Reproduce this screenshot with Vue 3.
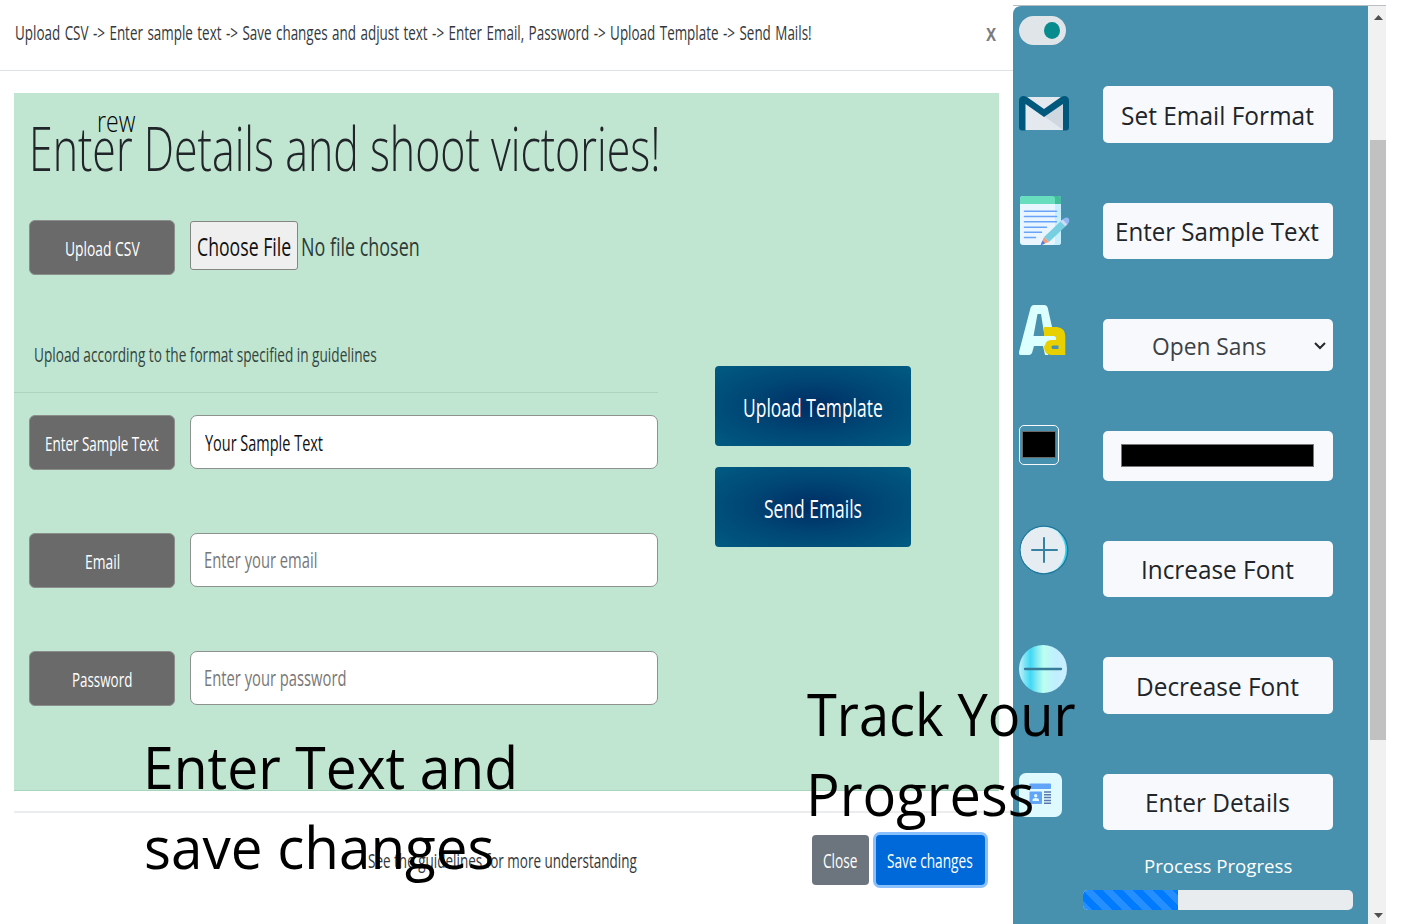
<script setup>
// Squeezes a label horizontally so that its drawn glyphs span the given width.
const ctx = document.createElement('canvas').getContext('2d')
const vFit = {
  mounted(el, { value }) {
    const cs = getComputedStyle(el)
    ctx.font = `${cs.fontWeight} ${cs.fontSize} ${cs.fontFamily}`
    ctx.wordSpacing = cs.wordSpacing
    const m = ctx.measureText(el.textContent.trim())
    const scale = value / (m.actualBoundingBoxLeft + m.actualBoundingBoxRight)
    const left = m.actualBoundingBoxLeft * scale
    el.style.transform = `scaleX(${scale})`
    el.style.marginLeft = `${left}px`
    el.style.marginRight = `${value - left - m.width}px`
  }
}

const fields = [
  { id: 'sample', label: 'Enter Sample Text', labelWidth: 112, text: 'Your Sample Text', textWidth: 118, filled: true },
  { id: 'email', label: 'Email', labelWidth: 33, text: 'Enter your email', textWidth: 111 },
  { id: 'password', label: 'Password', labelWidth: 58, text: 'Enter your password', textWidth: 140 }
]
const progress = 35.2
</script>

<template>
  <div class="page">
    <main class="modal">
      <header class="modal-head">
        <span v-fit="795" class="t steps">Upload CSV -&gt; Enter sample text -&gt; Save changes and adjust text -&gt; Enter Email, Password -&gt; Upload Template -&gt; Send Mails!</span>
        <span v-fit="10" class="t close-x">x</span>
      </header>

      <section class="panel">
        <div class="form">
          <h1><span v-fit="624" class="t">Enter Details and shoot victories!</span></h1>
          <div class="row upload">
            <div class="label"><span v-fit="74.5" class="t">Upload CSV</span></div>
            <div class="file">
              <div class="choose"><span v-fit="93" class="t">Choose File</span></div>
              <span v-fit="116" class="t">No file chosen</span>
            </div>
          </div>
          <p class="hint"><span v-fit="341.5" class="t">Upload according to the format specified in guidelines</span></p>
          <div v-for="f in fields" :key="f.id" class="row field">
            <div class="label"><span v-fit="f.labelWidth" class="t">{{ f.label }}</span></div>
            <div class="input" :class="{ filled: f.filled }"><span v-fit="f.textWidth" class="t">{{ f.text }}</span></div>
          </div>
        </div>
        <div class="actions">
          <div class="action"><span v-fit="138" class="t">Upload Template</span></div>
          <div class="action"><span v-fit="97" class="t">Send Emails</span></div>
        </div>
      </section>

      <footer class="modal-foot">
        <div class="guide"><span v-fit="268" class="t">See the guidelines for more understanding</span></div>
        <div class="btn grey"><span v-fit="33.5" class="t">Close</span></div>
        <div class="btn blue"><span v-fit="84.5" class="t">Save changes</span></div>
      </footer>
    </main>

    <aside class="side">
      <div class="tools">
        <div class="tool toggle-row"><div class="toggle"><i></i></div></div>

        <div class="tool mail">
          <svg width="50" height="35" viewBox="0 0 50 35">
            <path d="M5 1h40v33H5z" fill="#e3e9ee" />
            <path d="M25 20 44 34V8z" fill="#cfd8e0" />
            <path d="M0 5Q0 0 5 0L8 1 25 13 42 1 45 0Q50 0 50 5V31Q50 34.500 47 34.500H44V8L25 21 6.500 8V34.500H3Q0 34.500 0 31Z" fill="#00597d" />
          </svg>
          <div class="key"><span v-fit="192" class="t">Set Email Format</span></div>
        </div>

        <div class="tool note">
          <svg width="51" height="50" viewBox="0 0 51 50">
            <rect x="1" y="0" width="41" height="49" rx="3" fill="#e9f5ff" />
            <path d="M36 8h6v38q0 3-3 3h-6q3 0 3-3z" fill="#c6f0ff" />
            <path d="M1 8V3q0-3 3-3h35q3 0 3 3v5z" fill="#67dfbf" />
            <path d="M33 0h6q3 0 3 3v5h-6V3q0-3-3-3z" fill="#44bd9c" />
            <path d="M5.500 15.300h32M5.500 20.500h32M5.500 25.700h32M5.500 31.200h22M5.500 36.300h17M5.500 41.500h11" stroke="#6aa4f8" stroke-width="1.600" stroke-linecap="round" />
            <path d="m25 41 18-17 5 5-18 17z" fill="#78cfe2" />
            <path d="m43 24 2-1.500q3-2 5 .5 1 2-.5 4L48 29z" fill="#94b8f3" />
            <path d="m41.500 25.500 2-2 4.700 4.800-2 2z" fill="#cfdcf8" />
            <path d="m25 41-3 7.500 8-2.500z" fill="#f09c7d" />
            <path d="m23.500 44.500-2 5 4.500-2z" fill="#4d7be5" />
          </svg>
          <div class="key"><span v-fit="202" class="t">Enter Sample Text</span></div>
        </div>

        <div class="tool face">
          <svg width="47" height="51" viewBox="0 0 47 51">
            <path fill-rule="evenodd" d="M11.500 3Q12.500 0 15 0H25Q28 0 28.800 3L35 31 29 50H26L24 41H15L13 48Q12 50 10 50H2Q-.5 50 0 47ZM18.500 9 14.500 31H25.500L22 9Z" fill="#dcffff" />
            <path fill-rule="evenodd" d="M25 22H38Q46.300 23 46.300 31V50H32Q25 49 25 42 25 36 32 35H37V32.500Q37 31 35 31H25ZM34 40.500Q32.500 40.500 32.500 42.200T34 44H39.500V40.500Z" fill="#e7cf00" />
            <path d="M16 31H35Q37 31 37 32.500V35H31Q27 35 26 40.500H16Z" fill="#dcffff" />
          </svg>
          <div class="key">
            <span v-fit="113" class="t">Open Sans</span>
            <svg class="chev" width="12" height="8" viewBox="0 0 12 8"><path d="m1 1 5 5 5-5" fill="none" stroke="#24282c" stroke-width="2" /></svg>
          </div>
        </div>

        <div class="tool colour">
          <div class="swatch"><i></i></div>
          <div class="key"><i></i></div>
        </div>

        <div class="tool plus">
          <svg width="50" height="50" viewBox="0 0 50 50">
            <defs><linearGradient id="edge"><stop offset=".78" stop-color="#c5f7ff" /><stop offset="1" stop-color="#0bc5e6" /></linearGradient></defs>
            <circle cx="25" cy="25" r="23.800" fill="url(#edge)" stroke="#23779c" stroke-width="1.300" />
            <ellipse cx="24" cy="25" rx="22.300" ry="22.800" fill="#e5edf3" />
            <path d="M25 13v24M13 25h25" stroke="#3782a3" stroke-width="2" stroke-linecap="round" />
          </svg>
          <div class="key"><span v-fit="151" class="t">Increase Font</span></div>
        </div>

        <div class="tool minus">
          <svg width="49" height="49" viewBox="0 0 49 49">
            <defs><linearGradient id="shine"><stop offset="0" stop-color="#c5f3fa" /><stop offset=".1" stop-color="#8ae7f7" /><stop offset=".24" stop-color="#40d8f4" /><stop offset=".34" stop-color="#75e5f3" /><stop offset=".51" stop-color="#bbffef" /><stop offset=".75" stop-color="#c0efff" /><stop offset="1" stop-color="#c9efff" /></linearGradient></defs>
            <circle cx="24" cy="24" r="24" fill="url(#shine)" />
            <path d="M6 24h36" stroke="#367b98" stroke-width="2.300" stroke-linecap="round" />
          </svg>
          <div class="key"><span v-fit="161" class="t">Decrease Font</span></div>
        </div>

        <div class="tool details">
          <svg width="44" height="44" viewBox="0 0 44 44">
            <rect width="43" height="44" rx="7" fill="#dffaff" />
            <rect x="10.500" y="10.500" width="21.500" height="5.500" rx="1" fill="#62a4f8" />
            <rect x="10.500" y="18.500" width="12.500" height="12.500" rx="1" fill="#62a4f8" />
            <circle cx="16.700" cy="22.700" r="1.700" fill="#dffaff" />
            <path d="M13.500 28v-1q0-2 3.200-2t3.300 2v1z" fill="#dffaff" />
            <path d="M25 19h7M25 21.800h7M25 24.600h7M25 27.400h7M25 30.200h7" stroke="#5877ae" stroke-width="1.500" />
          </svg>
          <div class="key"><span v-fit="142" class="t">Enter Details</span></div>
        </div>

        <div class="progress">
          <span v-fit="146.500" class="t">Process Progress</span>
          <div class="bar"><div class="fill" :style="{ width: progress + '%' }"></div></div>
        </div>
      </div>

      <div class="scroll">
        <svg width="9" height="5" viewBox="0 0 9 5"><path d="M4.500 0 9 5H0z" fill="#505050" /></svg>
        <div class="thumb"></div>
        <svg class="down" width="9" height="5" viewBox="0 0 9 5"><path d="M0 0h9L4.500 5z" fill="#505050" /></svg>
      </div>
    </aside>

    <div class="over rew"><span v-fit="37" class="t">rew</span></div>
    <div class="over enter">
      <div><span v-fit="366" class="t">Enter Text and</span></div>
      <div class="second"><span v-fit="347" class="t">save changes</span></div>
    </div>
    <div class="over track">
      <div><span v-fit="268" class="t">Track Your</span></div>
      <div class="second"><span v-fit="222" class="t">Progress</span></div>
    </div>
  </div>
</template>

<style>
html, body { margin: 0; background: #fff; overflow: hidden; }
</style>

<style scoped>
* { box-sizing: border-box; }
.page { position: relative; display: flex; width: 1423px; height: 924px; overflow: hidden; background: #fff; font-family: "Open Sans", "Noto Sans", sans-serif; color: #212529; font-size: 20.5px; }
.t { display: inline-block; flex: none; white-space: nowrap; transform-origin: 0 50%; }
.modal { width: 1013px; display: flex; flex-direction: column; }
.modal-head { height: 71px; padding: 0 17px 6px 15.500px; border-bottom: 1px solid #dee2e6; display: flex; align-items: center; justify-content: space-between; color: #33383c; }
.steps { word-spacing: 1.500px; }
.close-x { font-weight: 600; font-size: 24px; line-height: 24px; color: #7b7b7b; margin-top: -1px; }
.panel { margin: 21.500px 14px 0; height: 698px; background: #c0e6d1; border-bottom: 1px solid #a9d4be; display: flex; }
.form { width: 644px; }
h1 { margin: 0; padding-left: 19px; height: 127.500px; line-height: 110px; font-size: 61px; font-weight: 300; display: flex; }
.row { display: flex; padding-left: 15px; }
.label { width: 146px; height: 55px; margin-right: 15px; background: #6a6a6a; border: 1px solid #8b8d8c; border-radius: 6px; color: #fff; display: flex; align-items: center; justify-content: center; line-height: 28px; padding: 1px 0 0 1px; }
.upload { height: 103px; }
.upload .label { padding-top: 0; }
.file { display: flex; align-items: center; height: 49px; font-size: 26px; color: #2e3b38; line-height: 49px; padding-top: 2px; }
.file > .t { margin-top: 1px; }
.choose { width: 108px; height: 49px; margin: -1px 4.500px 0 0; border: 1px solid #858585; border-radius: 3px; background: #efefef; color: #111; display: flex; align-items: center; justify-content: center; padding-top: 2px; }
.hint { margin: 0 0 22.500px; height: 69.500px; padding-left: 21px; display: flex; line-height: 63.500px; color: #33443e; border-bottom: 1px solid #aed3c1; }
.field { height: 117.800px; }
.input { width: 468px; height: 54px; border: 1px solid #8d918f; border-radius: 7px; background: #fff; padding: 0 0 0 14px; display: flex; align-items: center; font-size: 22.500px; color: #777; }
.input.filled { color: #111; }
.actions { padding: 273.500px 0 0 57px; }
.action { width: 195.500px; height: 80px; margin-bottom: 21.200px; border-radius: 4px; background: radial-gradient(ellipse, #002d63 0%, #004574 45%, #005b82 100%); color: #fff; font-size: 26px; display: flex; align-items: center; justify-content: center; padding: 1px 0 0 1px; }
.modal-foot { margin: 20px 0 0 14px; border-top: 2px solid #ebecee; padding: 22px 28.500px 0 0; display: flex; align-items: center; height: 74px; color: #33383c; }
.guide { margin: 0 auto 0 355px; display: flex; }
.btn { height: 50px; border-radius: 4px; display: flex; align-items: center; justify-content: center; color: #fff; }
.grey { width: 57px; background: #6c757d; margin-right: 7.500px; }
.blue { width: 108.500px; background: #0069d9; box-shadow: 0 0 0 3px #8bc0ff; }
.side { width: 373px; margin-top: 5px; border-top: 1px solid #b9bec2; display: flex; }
.tools { width: 355px; background: #4790ae; border-top-left-radius: 8px; font-size: 25px; }
.tool { display: grid; grid-template-columns: 84px 230px; padding-left: 5.500px; align-items: start; }
.key { height: 57px; border-radius: 5px; background: #f8f9fc; display: flex; align-items: center; justify-content: center; padding: 0 0 0 1px; }
.toggle-row { height: 80px; padding-top: 10px; }
.toggle { width: 47px; height: 29px; border-radius: 15px; background: #dfe5e9; padding: 6px 5px 0 25px; }
.toggle i { display: block; width: 16px; height: 17px; border-radius: 50%; background: #078b8d; }
.mail { height: 109px; } .mail svg { margin-top: 10px; }
.note { height: 110px; } .note svg { margin-top: 1px; } .note .key { margin-top: 8px; height: 56px; }
.face { height: 115px; } .face .key { margin-top: 14px; height: 52px; font-size: 24px; color: #3c4146; padding: 1px 6.500px 0 50px; justify-content: space-between; }
.colour { height: 105px; } .colour .key { margin-top: 11px; height: 50px; padding: 0; }
.colour .key i { width: 193px; height: 23px; margin-top: -1px; background: #000; border: 1px solid #777; }
.swatch { margin-top: 5px; width: 40px; height: 40px; border: 1px solid #f8f9fa; border-radius: 5px; padding: 5px 0 0 2px; }
.swatch i { display: block; width: 34px; height: 27px; background: #000; border: 1px solid #6c6868; }
.plus { height: 115px; } .plus .key { margin-top: 16px; height: 56px; }
.minus { height: 130px; } .minus svg { margin-top: 5px; } .minus .key { margin-top: 17px; padding-top: 1px; }
.details { height: 80px; } .details svg { margin-top: 3px; } .details .key { margin-top: 4px; height: 56px; }
.progress { margin-left: 69.500px; width: 270.500px; display: flex; flex-direction: column; align-items: center; color: #fff; font-size: 18.500px; }
.progress .t { line-height: 30px; margin-top: 1px; }
.bar { width: 100%; height: 20px; margin-top: 9px; border-radius: 5px; background: #e9ecef; overflow: hidden; }
.fill { height: 100%; background: linear-gradient(45deg, #268fff 25%, #007bff 25%, #007bff 50%, #268fff 50%, #268fff 75%, #007bff 75%) 0 0 / 20px 20px; }
.scroll { width: 18px; background: #f1f1f1; display: flex; flex-direction: column; align-items: flex-end; padding-top: 9px; }
.scroll svg { margin-right: 3px; flex: none; }
.thumb { width: 16px; height: 600px; margin-top: 120px; background: #c1c1c1; }
.scroll .down { margin-top: 173px; }
.over { position: absolute; color: #000; font-size: 58px; line-height: 80px; }
.over div { display: flex; }
.rew { left: 99px; top: 101px; display: flex; font-size: 30px; line-height: 40px; font-weight: 300; }
.enter { left: 148px; top: 727px; }
.enter .second { margin-left: -2px; }
.track { left: 807px; top: 674px; }
.track .second { margin-left: 4px; }
</style>
